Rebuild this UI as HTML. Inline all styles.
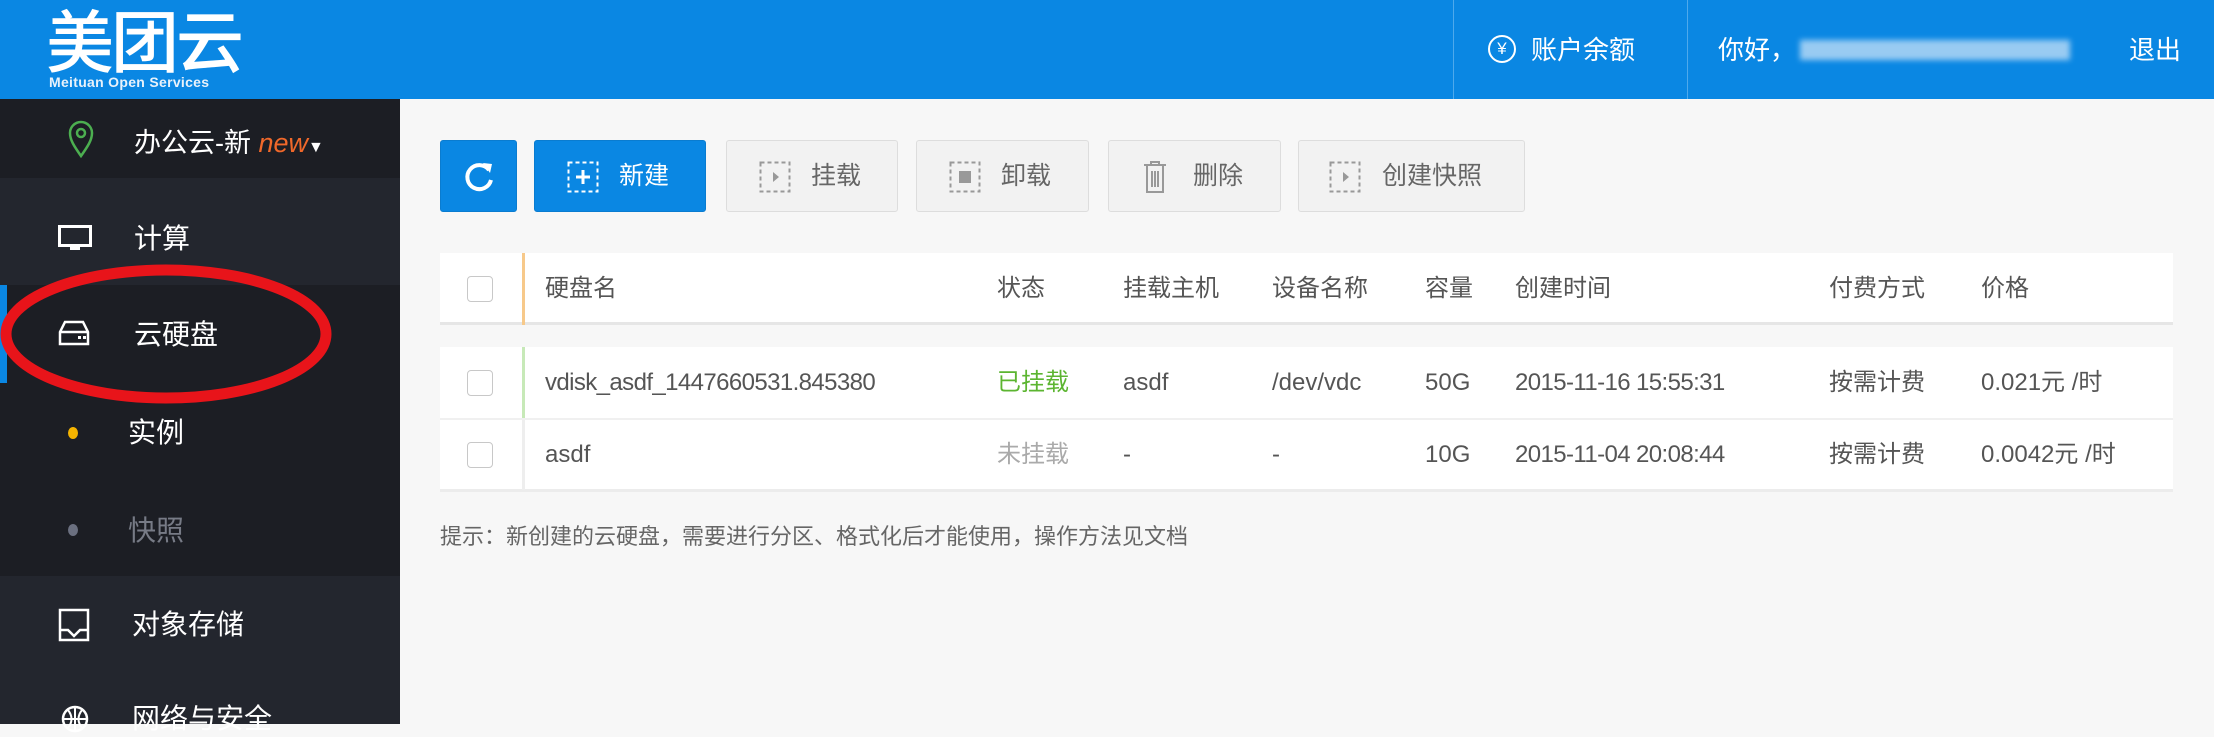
<!DOCTYPE html>
<html><head><meta charset="utf-8"><style>
*{margin:0;padding:0;box-sizing:border-box}
body{width:2214px;height:724px;overflow:hidden;background:#f7f7f7;font-family:"Liberation Sans","Noto Sans CJK SC",sans-serif;position:relative}
.a{position:absolute;white-space:nowrap}
#hdr{left:0;top:0;width:2214px;height:99px;background:#0a87e3}
#side{left:0;top:99px;width:400px;height:625px;background:#23262e}
.btn{position:absolute;top:140px;height:72px;border:1px solid #ddd;background:#f2f2f2;border-radius:3px;color:#666;font-size:25px;line-height:70px}
.btn.b{background:#0a87e3;border-color:#0a7cd0;color:#fff}
.t{font-size:24px;color:#555;line-height:72px}
.r1{top:347px}.r2{top:419px}.hh{top:253px}
.cb{position:absolute;width:26px;height:26px;border:1.5px solid #c8c8c8;border-radius:4px;background:#fff}
</style></head><body>
<div id="hdr" class="a"></div>
<div class="a" style="left:46px;top:4px;font-size:68px;line-height:68px;color:#fff;letter-spacing:-3px;font-family:'Noto Sans CJK SC',sans-serif;font-weight:500">美团云</div>
<div class="a" style="left:49px;top:74px;font-size:14px;font-weight:bold;color:#e8f2fb;letter-spacing:0.3px">Meituan Open Services</div>
<div class="a" style="left:1453px;top:0;width:1px;height:99px;background:#4ea9ec"></div>
<div class="a" style="left:1687px;top:0;width:1px;height:99px;background:#4ea9ec"></div>
<div class="a" style="left:1488px;top:35px;width:28px;height:28px;border:2px solid #fff;border-radius:50%;color:#fff;font-size:17px;line-height:24px;text-align:center">¥</div>
<div class="a" style="left:1531px;top:30px;font-size:26px;color:#fff">账户余额</div>
<div class="a" style="left:1718px;top:30px;font-size:26px;color:#fff">你好，</div>
<div class="a" style="left:1800px;top:40px;width:270px;height:20px;background:#a9d3f4;filter:blur(3px);opacity:.9"></div>
<div class="a" style="left:2129px;top:30px;font-size:26px;color:#fff">退出</div>

<div id="side" class="a"></div>
<div class="a" style="left:0;top:99px;width:400px;height:79px;background:#1c1e24"></div>
<svg class="a" style="left:68px;top:120px" width="26" height="38" viewBox="0 0 26 38"><path d="M13 36C6 26 2 20 2 13A11 11 0 0 1 24 13C24 20 20 26 13 36Z" fill="none" stroke="#4caf50" stroke-width="2.5"/><circle cx="13" cy="13" r="4" fill="none" stroke="#4caf50" stroke-width="2.5"/></svg>
<div class="a" style="left:134px;top:121px;font-size:27px;color:#fff">办公云-新 <i style="color:#f0682a;font-size:27px">new</i><span style="font-size:16px">▼</span></div>
<svg class="a" style="left:58px;top:225px" width="34" height="28" viewBox="0 0 34 28"><rect x="1.5" y="1.5" width="31" height="19" fill="none" stroke="#fff" stroke-width="3"/><rect x="12" y="21" width="10" height="4" fill="#fff"/></svg>
<div class="a" style="left:134px;top:217px;font-size:28px;color:#fff">计算</div>
<div class="a" style="left:0;top:285px;width:400px;height:98px;background:#1c1e24"></div>
<div class="a" style="left:0;top:285px;width:7px;height:98px;background:#0a87e3"></div>
<div class="a" style="left:0;top:383px;width:400px;height:193px;background:#1c1e24"></div>
<svg class="a" style="left:58px;top:320px" width="32" height="26" viewBox="0 0 32 26"><path d="M2 12L7 2H25L30 12V24H2Z M2 12H30" fill="none" stroke="#fff" stroke-width="2.5"/><rect x="20" y="16" width="3" height="3" fill="#fff"/><rect x="25" y="16" width="3" height="3" fill="#fff"/></svg>
<div class="a" style="left:134px;top:313px;font-size:28px;color:#fff">云硬盘</div>
<svg class="a" style="left:0;top:262px" width="340" height="145"><ellipse cx="166" cy="72" rx="160" ry="64" fill="none" stroke="#e8141a" stroke-width="11"/></svg>
<div class="a" style="left:68px;top:427px;width:10px;height:12px;border-radius:50%;background:#f5b400"></div>
<div class="a" style="left:128px;top:411px;font-size:28px;color:#fff">实例</div>
<div class="a" style="left:68px;top:524px;width:10px;height:12px;border-radius:50%;background:#6b7080"></div>
<div class="a" style="left:128px;top:509px;font-size:28px;color:#777b86">快照</div>
<svg class="a" style="left:58px;top:608px" width="32" height="34" viewBox="0 0 32 34"><path d="M2 2H30V32H2Z M2 22H10L16 28L22 22H30" fill="none" stroke="#fff" stroke-width="2.5"/></svg>
<div class="a" style="left:132px;top:603px;font-size:28px;color:#fff">对象存储</div>
<svg class="a" style="left:60px;top:704px" width="30" height="30" viewBox="0 0 30 30"><circle cx="15" cy="15" r="12" fill="none" stroke="#fff" stroke-width="2.5"/><path d="M3 15H27M15 3V27M8 6Q15 15 8 24M22 6Q15 15 22 24" fill="none" stroke="#fff" stroke-width="2"/></svg>
<div class="a" style="left:132px;top:697px;font-size:28px;color:#fff">网络与安全</div>

<div class="btn b" style="left:440px;width:77px;text-align:center"><svg style="margin-top:19px" width="32" height="34" viewBox="0 0 32 34"><path d="M26 10A12 12 0 1 0 28 20" fill="none" stroke="#fff" stroke-width="4"/><path d="M20 3L29 4L27 13Z" fill="#fff"/></svg></div>
<div class="btn b" style="left:534px;width:172px"><svg class="a" style="left:32px;top:20px" width="32" height="32"><rect x="1.5" y="1.5" width="29" height="29" fill="none" stroke="#fff" stroke-width="2" stroke-dasharray="4 3"/><path d="M16 9V23M9 16H23" stroke="#fff" stroke-width="3"/></svg><span class="a" style="left:84px;top:0">新建</span></div>
<div class="btn" style="left:726px;width:172px"><svg class="a" style="left:32px;top:20px" width="32" height="32"><rect x="1.5" y="1.5" width="29" height="29" fill="none" stroke="#999" stroke-width="2" stroke-dasharray="4 3"/><path d="M14 11L20 16L14 21Z" fill="#999"/></svg><span class="a" style="left:84px;top:0">挂载</span></div>
<div class="btn" style="left:916px;width:173px"><svg class="a" style="left:32px;top:20px" width="32" height="32"><rect x="1.5" y="1.5" width="29" height="29" fill="none" stroke="#999" stroke-width="2" stroke-dasharray="4 3"/><rect x="10" y="10" width="12" height="12" fill="#999"/></svg><span class="a" style="left:84px;top:0">卸载</span></div>
<div class="btn" style="left:1108px;width:173px"><svg class="a" style="left:32px;top:18px" width="28" height="36"><path d="M3 6H25M10 6V3H18V6M6 6V33H22V6M11 12V28M14 12V28M17 12V28" fill="none" stroke="#999" stroke-width="2"/></svg><span class="a" style="left:84px;top:0">删除</span></div>
<div class="btn" style="left:1298px;width:227px"><svg class="a" style="left:30px;top:20px" width="32" height="32"><rect x="1.5" y="1.5" width="29" height="29" fill="none" stroke="#999" stroke-width="2" stroke-dasharray="4 3"/><path d="M14 11L20 16L14 21Z" fill="#999"/></svg><span class="a" style="left:83px;top:0">创建快照</span></div>

<div class="a" style="left:440px;top:253px;width:1733px;height:72px;background:#fff;border-bottom:3px solid #e6e6e6"></div>
<div class="a" style="left:522px;top:253px;width:3px;height:72px;background:#f7c98a"></div>
<div class="cb" style="left:467px;top:276px"></div>
<div class="a t hh" style="left:545px">硬盘名</div>
<div class="a t hh" style="left:997px">状态</div>
<div class="a t hh" style="left:1123px">挂载主机</div>
<div class="a t hh" style="left:1272px">设备名称</div>
<div class="a t hh" style="left:1425px">容量</div>
<div class="a t hh" style="left:1515px">创建时间</div>
<div class="a t hh" style="left:1829px">付费方式</div>
<div class="a t hh" style="left:1981px">价格</div>

<div class="a" style="left:440px;top:347px;width:1733px;height:145px;background:#fff;border-bottom:3px solid #ececec"></div>
<div class="a" style="left:440px;top:418px;width:1733px;height:2px;background:#f0f0f0"></div>
<div class="a" style="left:522px;top:347px;width:3px;height:71px;background:#c7e9b8"></div>
<div class="a" style="left:522px;top:420px;width:3px;height:70px;background:#eee"></div>
<div class="cb" style="left:467px;top:370px"></div>
<div class="cb" style="left:467px;top:442px"></div>
<div class="a t r1" style="left:545px;letter-spacing:-0.6px">vdisk_asdf_1447660531.845380</div>
<div class="a t r1" style="left:997px;color:#5cb531">已挂载</div>
<div class="a t r1" style="left:1123px">asdf</div>
<div class="a t r1" style="left:1272px">/dev/vdc</div>
<div class="a t r1" style="left:1425px">50G</div>
<div class="a t r1" style="left:1515px;letter-spacing:-0.6px">2015-11-16 15:55:31</div>
<div class="a t r1" style="left:1829px">按需计费</div>
<div class="a t r1" style="left:1981px">0.021元 /时</div>
<div class="a t r2" style="left:545px">asdf</div>
<div class="a t r2" style="left:997px;color:#aaa">未挂载</div>
<div class="a t r2" style="left:1123px">-</div>
<div class="a t r2" style="left:1272px">-</div>
<div class="a t r2" style="left:1425px">10G</div>
<div class="a t r2" style="left:1515px;letter-spacing:-0.6px">2015-11-04 20:08:44</div>
<div class="a t r2" style="left:1829px">按需计费</div>
<div class="a t r2" style="left:1981px">0.0042元 /时</div>

<div class="a" style="left:440px;top:519px;font-size:22px;color:#666">提示：新创建的云硬盘，需要进行分区、格式化后才能使用，操作方法见文档</div>
</body></html>
